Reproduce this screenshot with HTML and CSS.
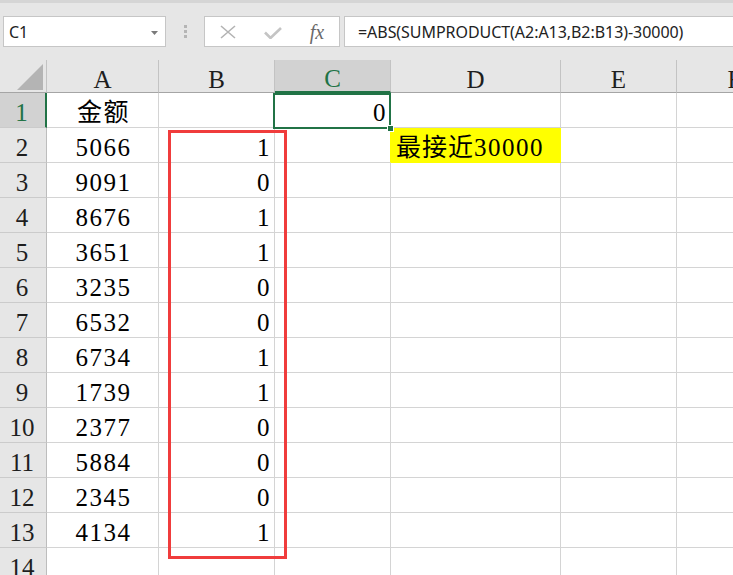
FILE: index.html
```html
<!DOCTYPE html>
<html lang="zh">
<head>
<meta charset="utf-8">
<title>Sheet</title>
<link rel="stylesheet" href="styles.css">
</head>
<body>
<div class="fbar">
  <div class="namebox"><span>C1</span><svg class="dd" width="7" height="4" viewBox="0 0 7 4"><polygon points="0,0 7,0 3.5,4" fill="#7a7a7a"/></svg></div>
  <div class="grip"><i></i><i></i><i></i></div>
  <div class="fbtns">
    <svg width="16" height="14" viewBox="0 0 16 14"><path d="M1 1 L15 13 M15 1 L1 13" stroke="#b3b3b3" stroke-width="1.6" fill="none"/></svg>
    <svg class="ok" width="18" height="12" viewBox="0 0 18 12"><polyline points="1,5.5 6.5,11 17,1" stroke="#c4c4c4" stroke-width="2.6" fill="none"/></svg>
    <span class="fx">fx</span>
  </div>
  <div class="finput">=ABS(SUMPRODUCT(A2:A13,B2:B13)-30000)</div>
</div>
<div class="sheet">
  <div class="grid">
    <div class="c ch corner"><svg width="26" height="26" viewBox="0 0 26 26"><polygon points="26,0 26,26 0,26" fill="#b4b4b4"/></svg></div>
    <div class="c ch">A</div><div class="c ch">B</div><div class="c ch hs">C</div><div class="c ch">D</div><div class="c ch">E</div><div class="c ch">F</div>

    <div class="c rh hs">1</div><div class="c ctr">金额</div><div class="c"></div><div class="c num">0</div><div class="c"></div><div class="c"></div><div class="c"></div>
    <div class="c rh">2</div><div class="c ctr">5066</div><div class="c num">1</div><div class="c yl"></div><div class="c yel">最接近<span class="lat">30000</span></div><div class="c"></div><div class="c"></div>
    <div class="c rh">3</div><div class="c ctr">9091</div><div class="c num">0</div><div class="c"></div><div class="c"></div><div class="c"></div><div class="c"></div>
    <div class="c rh">4</div><div class="c ctr">8676</div><div class="c num">1</div><div class="c"></div><div class="c"></div><div class="c"></div><div class="c"></div>
    <div class="c rh">5</div><div class="c ctr">3651</div><div class="c num">1</div><div class="c"></div><div class="c"></div><div class="c"></div><div class="c"></div>
    <div class="c rh">6</div><div class="c ctr">3235</div><div class="c num">0</div><div class="c"></div><div class="c"></div><div class="c"></div><div class="c"></div>
    <div class="c rh">7</div><div class="c ctr">6532</div><div class="c num">0</div><div class="c"></div><div class="c"></div><div class="c"></div><div class="c"></div>
    <div class="c rh">8</div><div class="c ctr">6734</div><div class="c num">1</div><div class="c"></div><div class="c"></div><div class="c"></div><div class="c"></div>
    <div class="c rh">9</div><div class="c ctr">1739</div><div class="c num">1</div><div class="c"></div><div class="c"></div><div class="c"></div><div class="c"></div>
    <div class="c rh">10</div><div class="c ctr">2377</div><div class="c num">0</div><div class="c"></div><div class="c"></div><div class="c"></div><div class="c"></div>
    <div class="c rh">11</div><div class="c ctr">5884</div><div class="c num">0</div><div class="c"></div><div class="c"></div><div class="c"></div><div class="c"></div>
    <div class="c rh">12</div><div class="c ctr">2345</div><div class="c num">0</div><div class="c"></div><div class="c"></div><div class="c"></div><div class="c"></div>
    <div class="c rh">13</div><div class="c ctr">4134</div><div class="c num">1</div><div class="c"></div><div class="c"></div><div class="c"></div><div class="c"></div>
    <div class="c rh">14</div><div class="c"></div><div class="c"></div><div class="c"></div><div class="c"></div><div class="c"></div><div class="c"></div>
  </div>
  <div class="selbox"></div>
  <div class="handle"></div>
  <div class="redbox"></div>
</div>
</body>
</html>
```
FILE: styles.css
```css
* { box-sizing: border-box; }
html, body { margin: 0; padding: 0; }
body {
  width: 733px;
  height: 575px;
  overflow: hidden;
  background: #fff;
  color: #000;
  font-family: "Liberation Serif", "Noto Sans CJK SC", serif;
}

/* formula bar */
.fbar {
  height: 60px;
  background: #e6e6e6;
  border-top: 3px solid #d5d5d5;
  display: flex;
  align-items: flex-start;
  padding: 13px 0 0 3px;
  font-family: "Noto Sans", sans-serif;
  font-size: 16px;
  color: #222;
}
.namebox {
  width: 163px;
  height: 31px;
  flex: none;
  background: #fff;
  border: 1px solid #c6c6c6;
  display: flex;
  align-items: center;
  justify-content: space-between;
  padding: 0 7px 0 5px;
}
.dd { margin-top: 2px; }
.grip {
  display: flex;
  flex-direction: column;
  gap: 2px;
  margin: 9px 0 0 18px;
}
.grip i { display: block; width: 3px; height: 3px; background: #b5b5b5; }
.fbtns {
  margin-left: 17px;
  width: 136px;
  height: 31px;
  flex: none;
  background: #fff;
  border: 1px solid #c6c6c6;
  display: grid;
  grid-template-columns: 45px 45px 44px;
  align-items: center;
  justify-items: center;
}
.ok { margin-top: 3px; }
.fx {
  font-family: "Liberation Serif", serif;
  font-style: italic;
  font-size: 20px;
  color: #6a6a6a;
  line-height: 1;
}
.finput {
  flex: 1;
  margin-left: 4px;
  margin-right: -2px;
  height: 31px;
  background: #fff;
  border: 1px solid #c6c6c6;
  display: flex;
  align-items: center;
  padding-left: 13px;
  white-space: nowrap;
  letter-spacing: -0.05px;
}

/* sheet */
.sheet { position: relative; }
.grid {
  display: grid;
  grid-template-columns: 47px 112px 116px 116px 170px 116px 116px;
  grid-template-rows: 33px;
  grid-auto-rows: 35px;
  font-size: 25px;
  letter-spacing: 1.5px;
}
.c {
  border-right: 1px solid #d4d4d4;
  border-bottom: 1px solid #d4d4d4;
  display: flex;
  align-items: flex-end;
  padding: 0 3px 2px 4px;
  white-space: nowrap;
  line-height: 1;
  overflow: hidden;
}
.ch {
  background: #e6e6e6;
  border-right-color: #c3c3c3;
  border-bottom-color: #a5a5a5;
  justify-content: center;
  padding: 0;
  letter-spacing: 0;
  color: #1e1e1e;
}
.rh {
  background: #e6e6e6;
  border-right-color: #bdbdbd;
  border-bottom-color: #cbcbcb;
  justify-content: center;
  padding: 0 2px 2px 0;
  letter-spacing: 0;
  color: #1e1e1e;
}
.hs { background: #d2d2d2; color: #217346; }
.ch.hs { border-bottom: 2px solid #217346; }
.rh.hs { border-right: 2px solid #217346; }
.corner { justify-content: flex-end; padding: 0 3px 2px 0; }
.ctr { justify-content: center; padding-left: 4px; padding-right: 2px; }
.num { justify-content: flex-end; }
.yl { border-right-color: #ff0; }
.yel { background: #ff0; border-color: #ff0; padding-left: 5px; letter-spacing: 1px; }
.lat { font-family: "Liberation Serif", serif; letter-spacing: 1.5px; }

.selbox {
  position: absolute;
  left: 273px;
  top: 33px;
  width: 118px;
  height: 36px;
  border: 2px solid #217346;
}
.handle {
  position: absolute;
  left: 387px;
  top: 65px;
  width: 7px;
  height: 7px;
  background: #217346;
  border: 1px solid #fff;
}
.redbox {
  position: absolute;
  left: 168px;
  top: 70px;
  width: 119px;
  height: 429px;
  border: 3px solid #f03c3c;
}
```
